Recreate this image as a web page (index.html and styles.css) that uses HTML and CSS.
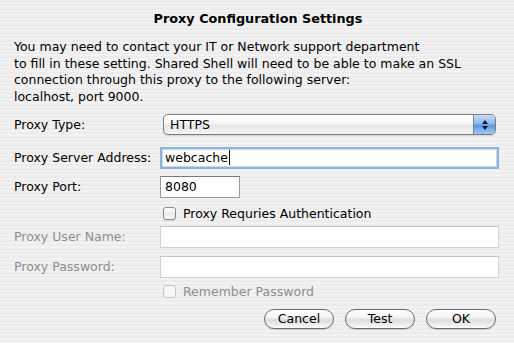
FILE: index.html
```html
<!DOCTYPE html>
<html>
<head>
<meta charset="utf-8">
<link rel="stylesheet" href="styles.css">
</head>
<body>
<div class="dialog">
  <h1 class="title">Proxy Configuration Settings</h1>
  <p class="intro">You may need to contact your IT or Network support department<br>to fill in these setting. Shared Shell will need to be able to make an SSL<br>connection through this proxy to the following server:<br>localhost, port 9000.</p>
  <div class="form">
    <div class="row row-type">
      <span class="label">Proxy Type:</span>
      <div class="popup"><span class="popup-text">HTTPS</span><span class="stepper"><svg width="8" height="12" viewBox="0 0 8 12"><path d="M4 1 L7 5 L1 5 Z M4 11 L7 7 L1 7 Z" fill="#0c1a33"/></svg></span></div>
    </div>
    <div class="row row-addr">
      <span class="label">Proxy Server Address:</span>
      <div class="field focus">webcache<span class="caret"></span></div>
    </div>
    <div class="row row-port">
      <span class="label">Proxy Port:</span>
      <div class="field port">8080</div>
    </div>
    <div class="row row-check">
      <span class="label"></span>
      <label class="check"><span class="box"></span>Proxy Requries Authentication</label>
    </div>
    <div class="row row-user">
      <span class="label disabled">Proxy User Name:</span>
      <div class="field off"></div>
    </div>
    <div class="row row-pass">
      <span class="label disabled">Proxy Password:</span>
      <div class="field off"></div>
    </div>
    <div class="row row-remember">
      <span class="label"></span>
      <label class="check disabled"><span class="box"></span>Remember Password</label>
    </div>
    <div class="buttons">
      <button class="btn">Cancel</button>
      <button class="btn">Test</button>
      <button class="btn">OK</button>
    </div>
  </div>
</div>
</body>
</html>
```
FILE: styles.css
```css
html, body {
  margin: 0;
  padding: 0;
}
body {
  width: 514px;
  height: 343px;
  overflow: hidden;
  font-family: "DejaVu Sans", "Liberation Sans", sans-serif;
  font-size: 12.5px;
  color: #000;
  background: repeating-linear-gradient(to bottom, #ececec 0, #ececec 2px, #f2f2f2 2px, #f2f2f2 4px);
}
.dialog {
  padding: 0 15px 0 14px;
}
.title {
  margin: 0;
  padding-top: 11px;
  font-size: 12.8px;
  font-weight: bold;
  text-align: center;
  line-height: 16px;
  padding-left: 3px;
}
.intro {
  margin: 12px 0 0 0;
  line-height: 16.7px;
}
.form {
  display: flex;
  flex-direction: column;
}
.row {
  display: grid;
  grid-template-columns: 146px 1fr;
  align-items: center;
}
.label {
  white-space: nowrap;
}
.label.disabled {
  color: #8c8c8c;
}
.row-type { margin-top: 8px; height: 22px; }
.row-addr { margin-top: 11px; height: 22px; }
.row-port { margin-top: 7px; height: 22px; }
.row-check { margin-top: 8px; height: 14px; }
.row-user { margin-top: 6px; height: 22px; }
.row-pass { margin-top: 8px; height: 22px; }
.row-remember { margin-top: 6px; height: 14px; }

.popup {
  margin: 0 3px;
  height: 21px;
  box-sizing: border-box;
  border: 1px solid #7b7b7b;
  border-radius: 5px;
  background: linear-gradient(to bottom, #ffffff 0%, #f6f6f6 45%, #e6e6e6 55%, #f4f4f4 100%);
  display: flex;
  align-items: center;
  position: relative;
  overflow: hidden;
  box-shadow: 0 1px 1px rgba(0,0,0,0.12);
}
.popup-text {
  padding-left: 6px;
  flex: 1;
}
.stepper {
  width: 21px;
  align-self: stretch;
  background: linear-gradient(to bottom, #c8ddf6 0%, #8ab7ec 45%, #5d98e0 55%, #9ccbf6 100%);
  border-left: 1px solid #6a87ad;
  display: flex;
  align-items: center;
  justify-content: center;
}
.field {
  height: 22px;
  box-sizing: border-box;
  background: #fff;
  border: 1px solid #9b9b9b;
  border-top-color: #7a7a7a;
  padding: 0 4px;
  display: flex;
  align-items: center;
}
.field.focus {
  border: 2px solid #8fb3dc;
  box-shadow: inset 0 0 0 1px #c6d9ef;
  padding-left: 3px;
}
.caret {
  display: inline-block;
  width: 1px;
  height: 15px;
  background: #000;
  margin-left: 1px;
}
.field.port {
  width: 80px;
}
.field.off {
  border-color: #d2d2d2;
  border-top-color: #c2c2c2;
}
.check {
  display: flex;
  align-items: center;
  padding-left: 3px;
  white-space: nowrap;
}
.check .box {
  width: 13px;
  height: 13px;
  box-sizing: border-box;
  border: 1px solid #8a8a8a;
  border-radius: 3px;
  background: linear-gradient(to bottom, #ffffff 0%, #ececec 60%, #f8f8f8 100%);
  margin-right: 7px;
  box-shadow: 0 1px 1px rgba(0,0,0,0.1);
}
.check.disabled {
  color: #8c8c8c;
}
.check.disabled .box {
  border-color: #c4c4c4;
  background: #f6f6f6;
  box-shadow: none;
}
.buttons {
  margin-top: 11px;
  display: flex;
  justify-content: flex-end;
  gap: 11px;
  padding-right: 3px;
}
.btn {
  width: 70px;
  height: 20px;
  box-sizing: border-box;
  border: 1px solid #6c6c6c;
  border-radius: 10px;
  background: linear-gradient(to bottom, #ffffff 0%, #f5f5f5 40%, #dcdcdc 55%, #f0f0f0 85%, #ffffff 100%);
  font-family: "DejaVu Sans", "Liberation Sans", sans-serif;
  font-size: 12.5px;
  color: #000;
  padding: 0;
  box-shadow: 0 1px 1px rgba(0,0,0,0.15);
}
```
